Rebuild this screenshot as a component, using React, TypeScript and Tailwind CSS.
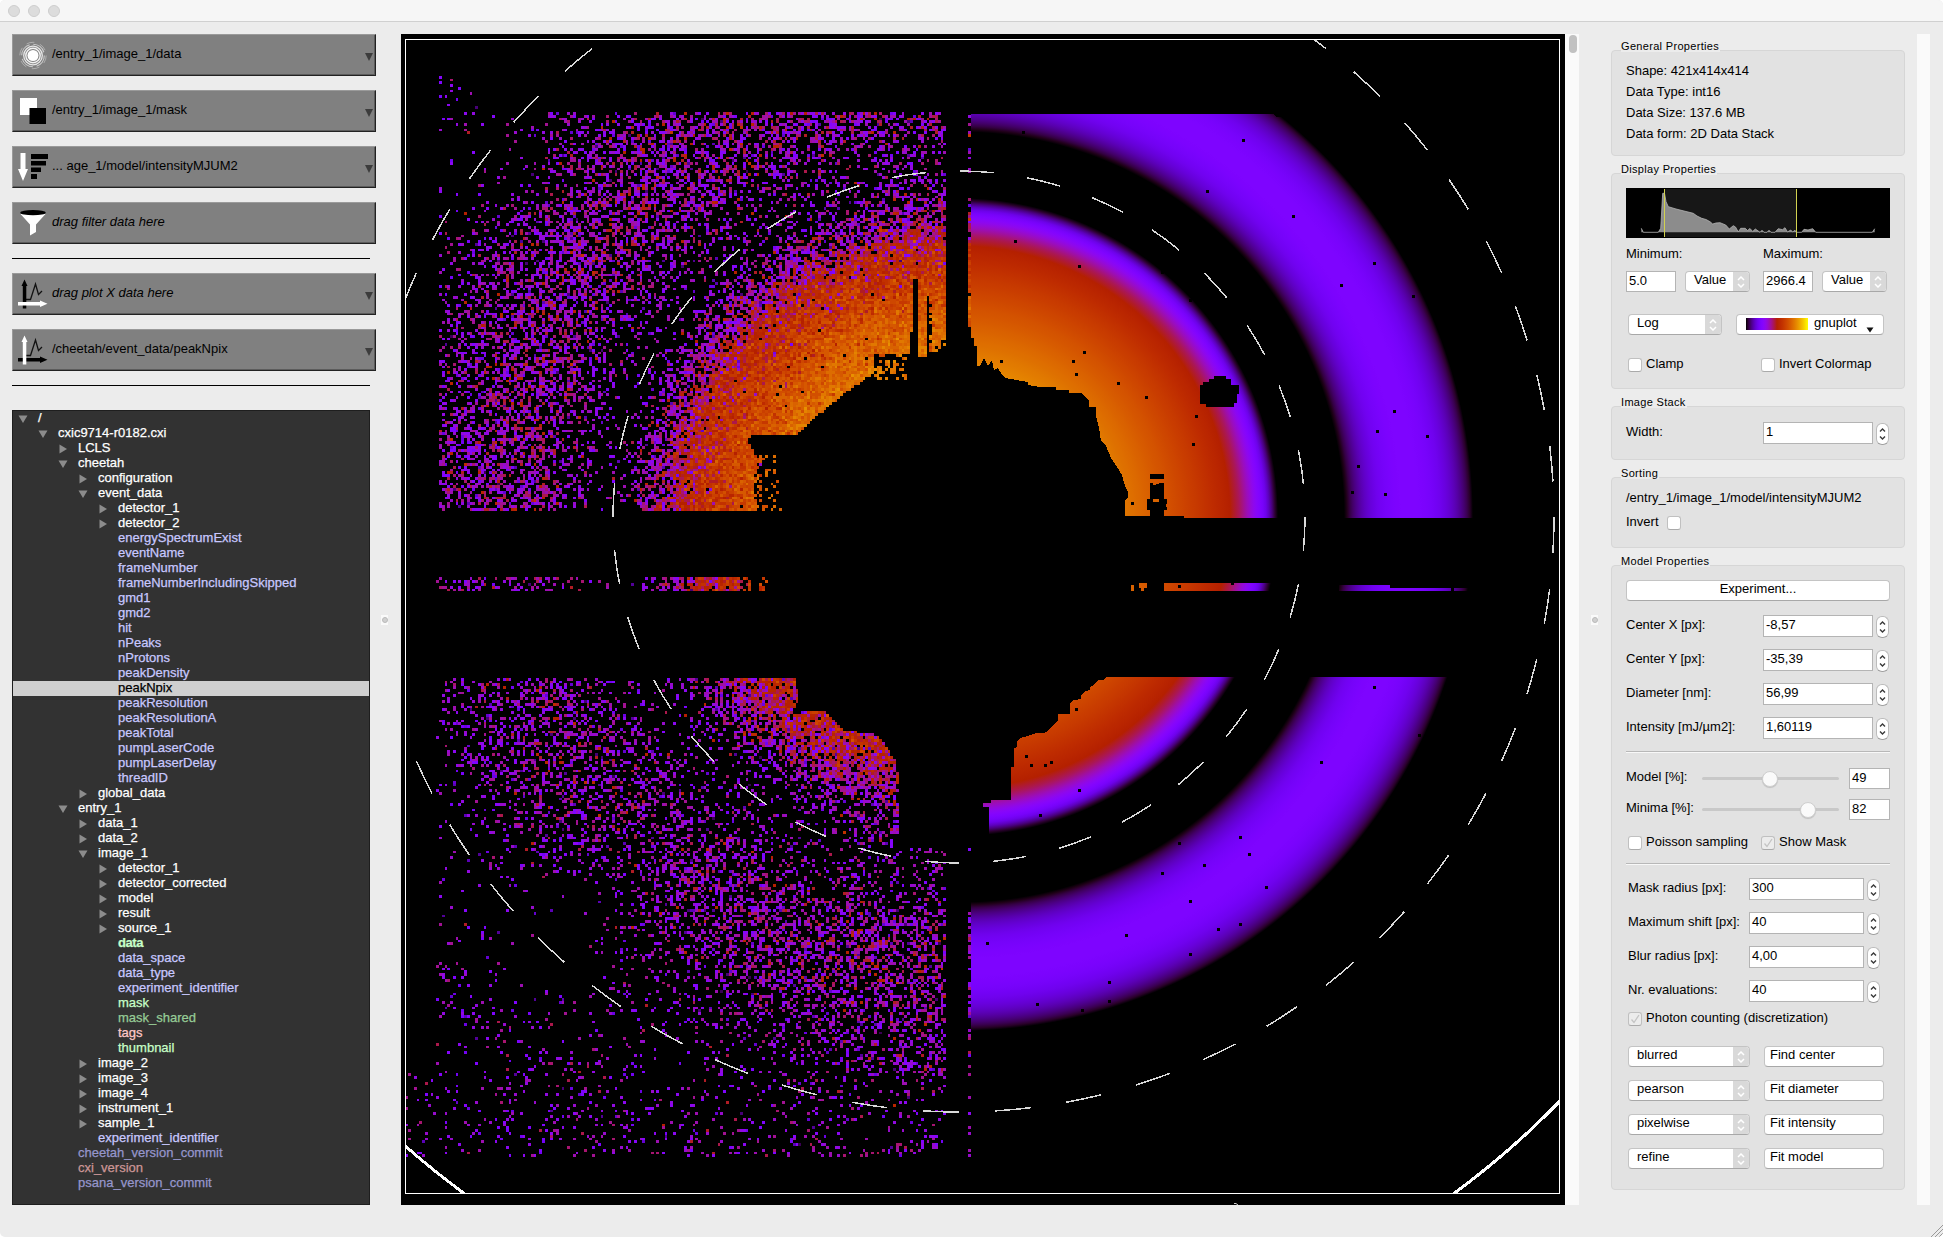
import React from "react";

/* ---------- diffraction pattern ---------- */

type Pt = [number, number];

const CX = 959;
const CY = 517;
const CELL = 2.787;

function gnuplot(t: number): string {
  const c = Math.max(0, Math.min(1, t));
  const r = Math.round(255 * Math.sqrt(c));
  const g = Math.round(255 * c * c * c);
  const b = Math.round(255 * Math.max(0, Math.sin(2 * Math.PI * c)));
  return `rgb(${r},${g},${b})`;
}

function lerp(table: Pt[], x: number): number {
  if (x <= table[0][0]) return table[0][1];
  for (let i = 1; i < table.length; i++) {
    if (x <= table[i][0]) {
      const [x0, y0] = table[i - 1];
      const [x1, y1] = table[i];
      return y0 + ((y1 - y0) * (x - x0)) / (x1 - x0);
    }
  }
  return table[table.length - 1][1];
}

// Brightness (0..1 in the colormap) of the central disc against radius.
const DISC: Pt[] = [
  [100, 0.86], [150, 0.805], [180, 0.745], [210, 0.68], [240, 0.6], [262, 0.53], [271, 0.5],
  [281, 0.44], [291, 0.35], [299, 0.27], [306, 0.2], [312, 0.1], [316, 0.03], [319, 0],
];

function model(r: number): number {
  if (r <= 319) return lerp(DISC, r);
  if (r <= 387 || r >= 513) return 0;
  return 0.246 * Math.pow(Math.sin((Math.PI * (r - 387)) / 126), 0.75);
}

// Mean photon count against radius.
const PHOTONS: Pt[] = [
  [120, 24], [150, 20], [180, 15], [210, 10], [240, 6.2], [271, 3.4], [281, 2.5], [291, 1.7],
  [300, 1.15], [310, 0.8], [319, 0.5], [330, 0.22], [346, 0.08], [360, 0.12], [380, 0.27],
  [405, 0.5], [430, 0.72], [455, 0.78], [480, 0.7], [505, 0.55], [530, 0.36], [560, 0.18],
  [595, 0.05], [640, 0.1], [690, 0.18], [740, 0.15], [800, 0.1],
];

const HOLE_TOP: Pt[] = [
  [754, 512], [754, 491], [757, 459], [748, 441], [754, 435], [798, 435], [817, 416], [844, 394],
  [874, 373], [874, 355], [911, 353], [911, 341], [913, 309], [913, 280], [918, 280], [918, 356],
  [927, 356], [928, 296], [931, 296], [931, 356], [937, 345], [946, 338], [946, 512],
];

const HOLE_BOTTOM: Pt[] = [
  [796, 670], [796, 684], [799, 698], [793, 713], [806, 712], [825, 711], [844, 730], [878, 735],
  [897, 763], [900, 802], [899, 845], [913, 848], [946, 850], [946, 670],
];

function inside(poly: Pt[], x: number, y: number): boolean {
  let hit = false;
  for (let i = 0, j = poly.length - 1; i < poly.length; j = i++) {
    const [xi, yi] = poly[i];
    const [xj, yj] = poly[j];
    if (yi > y !== yj > y && x < ((xj - xi) * (y - yi)) / (yj - yi) + xi) hit = !hit;
  }
  return hit;
}

function makeRandom(seed: number) {
  let s = seed;
  return () => {
    s = (s + 0x6d2b79f5) | 0;
    let t = Math.imul(s ^ (s >>> 15), 1 | s);
    t = (t + Math.imul(t ^ (t >>> 7), 61 | t)) ^ t;
    return ((t ^ (t >>> 14)) >>> 0) / 4294967296;
  };
}

const LEVELS = 40;

function buildNoise(): { color: string; d: string }[] {
  const rnd = makeRandom(182);
  const gauss = () => Math.sqrt(-2 * Math.log(rnd() + 1e-9)) * Math.cos(2 * Math.PI * rnd());
  const poisson = (m: number) => {
    if (m > 15) return Math.max(0, Math.round(m + Math.sqrt(m) * gauss()));
    const limit = Math.exp(-m);
    let k = 0;
    let p = rnd();
    while (p > limit) {
      k++;
      p *= rnd();
    }
    return k;
  };
  const paths: string[] = Array.from({ length: LEVELS }, () => "");
  for (let j = 0; j < 414; j++) {
    const y0 = Math.round(39.5 + j * CELL);
    const y1 = Math.round(39.5 + (j + 1) * CELL);
    const y = (y0 + y1) / 2;
    const top = y > 75 && y < 510;
    const strip = y > 576 && y < 591;
    const bottom = y > 677 && y < 1157;
    if (!top && !strip && !bottom) continue;
    for (let i = 0; i < 204; i++) {
      const x0 = Math.round(405.5 + i * CELL);
      const x1 = Math.min(971, Math.round(405.5 + (i + 1) * CELL));
      const x = (x0 + x1) / 2;
      const sliver = x > 968;
      if (x > 945 && !sliver) continue;
      if (x < (top ? 440 : 437) && !(bottom && y > 1070)) continue;
      if (y < 111 && x > 440 + (y - 72) * 1.5) continue;
      if (sliver && ((y > 326 && y < 844) || y < 114)) continue;
      let islands = false;
      if (top && !sliver && inside(HOLE_TOP, x, y)) {
        const a = x < 782 && y > 456 && rnd() < 0.42 * (1 - (x - 754) / 34);
        const b = x > 874 && x < 908 && y < 380 && y > 353 && rnd() < 0.4;
        const c = x > 929 && y < 352 && rnd() < 0.5;
        if (!a && !b && !c) continue;
        islands = true;
      }
      if (bottom && !sliver && inside(HOLE_BOTTOM, x, y)) continue;
      if (strip && (x > 772 || (x > 741 && rnd() < 0.5) || (x > 752 && x < 760))) continue;
      const r = Math.hypot(x - CX, y - CY);
      let mean = lerp(PHOTONS, r);
      if (r > 310) mean += 0.2 * Math.max(0, 1 - (CX - x) / 330) * (r < 560 ? 1 : 0.7);
      if (strip) mean *= 0.65;
      if (bottom) {
        mean *= r < 320 ? 0.56 : 0.72;
        const u = (x - 560 + (y - 935)) / Math.SQRT2;
        const v = (x - 560 - (y - 935)) / Math.SQRT2;
        mean *= 1 - 0.95 * Math.exp(-(u * u) / 4800 - (v * v) / 14000);
      }
      if (top && x < 545 && y < 200) mean *= 0.5;
      if (r < 240 && !islands && rnd() < 0.004) continue;
      const n = poisson(mean);
      if (n === 0) continue;
      const value = n * 40 + gauss() * 18;
      if (value < 7) continue;
      const t = Math.log(value / 5) / 6.38;
      const level = Math.max(0, Math.min(LEVELS - 1, Math.round(t * LEVELS)));
      paths[level] += `M${x0} ${y0}h${x1 - x0}v${y1 - y0}h${x0 - x1}z`;
    }
  }
  return paths
    .map((d, i) => ({ color: gnuplot((i + 0.1) / LEVELS), d }))
    .filter((p) => p.d !== "");
}

const NOISE = buildNoise();

const STOPS = Array.from({ length: 141 }, (_, i) => {
  const r = 100 + i * 3;
  return { offset: r / 520, color: gnuplot(model(r)) };
});

const MODEL_REGIONS = [
  "M971 114H1273L1277 117H1561V517.5H1184V516H1125V501L1128 497V492L1125 486L1122 475L1119 470L1111 458L1106 446L1101 441L1099 428L1096 416V407H1089V401L1084 395L1081 393H1069V390H1056V387H1040L1028 385V382L1005 378L1001 373L998 368L994 370L992 360L988 366L984 358L980 366H977V346H974V338H971Z",
  "M1164 583H1330V591H1164ZM1139 583H1147V588H1144V591H1141V588H1139ZM1131 585H1134V591H1131Z",
  "M1339 585H1390V588H1451V591H1339ZM1454 588H1470V591H1454Z",
  "M1106 677L1103 680H1098L1094 685L1090 687V690L1085 691L1081 696V699L1074 700L1070 703V714H1058V720L1054 725L1050 728L1047 732L1043 733H1036L1028 736L1020 738L1017 741V747L1014 748V767H1011V800H991V803H983V807H989V860H971V1100H1561V677Z",
].join("");

const DOTS: Pt[] = [
  [1023, 132], [1243, 140], [1207, 191], [1293, 216], [1374, 263], [1341, 285], [1413, 296],
  [1394, 411], [1377, 431], [1427, 436], [1358, 466], [1352, 492], [1385, 494], [1015, 241],
  [1079, 266], [1162, 272], [1190, 300], [1084, 352], [1073, 361], [1001, 361], [1076, 374],
  [1118, 383], [1146, 397], [1196, 416], [1193, 444], [1132, 503], [1076, 709], [1026, 756],
  [1031, 765], [1045, 765], [1051, 762], [1079, 790], [1040, 815], [1374, 687], [1419, 735],
  [1321, 762], [1240, 837], [1179, 843], [1249, 854], [1204, 865], [1162, 873], [1266, 887],
  [1190, 901], [1126, 935], [1218, 929], [1240, 924], [1190, 954], [987, 943], [1109, 982],
  [1037, 1004], [1082, 1010], [1109, 1001], [1179, 586], [1232, 583],
];

const INNER = (2 * Math.PI * 346) / 64;
const OUTER = (2 * Math.PI * 595) / 104;

function Viewer() {
  return (
    <svg className="block bg-black" width="1164" height="1171" viewBox="401 34 1164 1171">
      <defs>
        <radialGradient id="model" gradientUnits="userSpaceOnUse" cx={CX} cy={CY} r="520">
          {STOPS.map((s) => (
            <stop key={s.offset} offset={s.offset} stopColor={s.color} />
          ))}
        </radialGradient>
        <clipPath id="frame">
          <rect x="405" y="39" width="1155" height="1154" />
        </clipPath>
      </defs>
      <g clipPath="url(#frame)" shapeRendering="crispEdges">
        <path d={MODEL_REGIONS} fill="url(#model)" />
        <path
          d="M1150 474h14v5h-14zM1150 483h3v2h3v-1h3v-1h5v16h3v5h-1v3h1v3h-3v6h-14v-6h-3v-11h3z"
          fill="#000"
        />
        <path d="M1153 499h6v3h-6z" fill="#d96400" />
        <path
          d="M1200 385h3v-3h6v-3h5v-3h12v3h5v6h3v0h5v9h-2v9h-3v4h-28v-3h-6z"
          fill="#000"
        />
        {DOTS.map(([x, y]) => (
          <rect key={`${x}-${y}`} x={x - 1} y={y - 1} width="3" height="3" fill="#000" />
        ))}
        {NOISE.map((p) => (
          <path key={p.color} d={p.d} fill={p.color} />
        ))}
        <circle cx={CX} cy={CY} r="346" fill="none" stroke="#d9d9d9" strokeWidth="1.5" strokeDasharray={`${INNER} ${INNER}`} />
        <circle cx={CX} cy={CY} r="595" fill="none" stroke="#d9d9d9" strokeWidth="1.5" strokeDasharray={`${OUTER} ${OUTER}`} />
        <circle cx={CX} cy={CY} r="838" fill="none" stroke="#fff" strokeWidth="3" />
      </g>
      <rect x="405.5" y="39.5" width="1154" height="1154" fill="none" stroke="#fff" />
      <path d="M1234 1203.5h2l2 1.500" stroke="#ccc" fill="none" />
    </svg>
  );
}

/* ---------- left panel ---------- */

const AirIcon = () => (
  <g fill="none" stroke="#fff">
    <circle cx="17" cy="16.500" r="5.500" fill="#fff" stroke="none" />
    <circle cx="17" cy="16.500" r="7.200" strokeWidth="1.400" opacity=".9" />
    <circle cx="17" cy="16.500" r="9.300" strokeWidth="1.300" opacity=".8" />
    <circle cx="17" cy="16.500" r="11.300" strokeWidth="1.100" opacity=".6" strokeDasharray="14 3.750" />
    <circle cx="17" cy="16.500" r="13.200" strokeWidth=".9" opacity=".4" strokeDasharray="8 5.800" />
  </g>
);

const MaskIcon = () => (
  <g>
    <path d="M4 3h17v17H4z" fill="#fff" />
    <path d="M13.500 13H30v16H13.500z" fill="#000" />
  </g>
);

const SortIcon = () => (
  <g>
    <path d="M4.500 2h5v16h2.500L7 30 2 18h2.500z" fill="#fff" />
    <path d="M15 3h17v5H15zM15 10h15v4.500H15zM15 16.500h10V21H15zM15 23h6v5h-6z" fill="#000" />
  </g>
);

const FilterIcon = () => (
  <g>
    <path d="M4.500 7h25L20 17.500V25l-6 3.500v-11z" fill="#fff" />
    <ellipse cx="17" cy="5.700" rx="12.700" ry="2.600" fill="#000" />
  </g>
);

const Curve = () => <path d="M10 21.500h4.500L19.500 6l3 10.500L26 13" fill="none" stroke="#111" strokeWidth="1.300" />;
const UpArrow = ({ color }: { color: string }) => <path d="M8.500 1.500l3 6.500h-1.200v22.500H6.800V8H5.500z" fill={color} />;
const RightArrow = ({ color }: { color: string }) => <path d="M2 24h22v-1.500l7.500 3.200L24 29v-1.500H2z" fill={color} />;

const PlotXIcon = () => (
  <g>
    <Curve />
    <UpArrow color="#000" />
    <RightArrow color="#fff" />
  </g>
);

const PlotYIcon = () => (
  <g>
    <Curve />
    <RightArrow color="#000" />
    <UpArrow color="#fff" />
  </g>
);

function DropButton({ icon, label, hint, arrow = true }: { icon: React.ReactNode; label: string; hint?: boolean; arrow?: boolean }) {
  return (
    <div className="flex h-[42px] w-[364px] items-center border border-t-[#9a9a9a] border-l-[#9a9a9a] border-r-[#222] border-b-[#222] bg-[#808080] pl-[3px] pr-[2px] shadow-[inset_-1px_-1px_0_#5c5c5c]">
      <svg width="32" height="32" viewBox="0 0 32 32" className="shrink-0">
        {icon}
      </svg>
      <span className={hint ? "ml-[4px] flex-1 pb-[3px] italic" : "ml-[4px] flex-1 pb-[3px]"}>{label}</span>
      {arrow && (
        <svg width="8" height="8" viewBox="0 0 8 8" className="mt-[3px]">
          <path d="M0 0h8L4 8z" fill="#3c3c3c" />
        </svg>
      )}
    </div>
  );
}

type Row = { d: number; t: string; a?: "open" | "closed"; c?: string };

const WHITE = "text-white";
const BLUE = "text-[#c8c8ff]";
const DIM_BLUE = "text-[#9696cc]";
const GREEN = "text-[#c8ffc8]";

const ROWS: Row[] = [
  { d: 0, t: "/", a: "open" },
  { d: 1, t: "cxic9714-r0182.cxi", a: "open" },
  { d: 2, t: "LCLS", a: "closed" },
  { d: 2, t: "cheetah", a: "open" },
  { d: 3, t: "configuration", a: "closed" },
  { d: 3, t: "event_data", a: "open" },
  { d: 4, t: "detector_1", a: "closed" },
  { d: 4, t: "detector_2", a: "closed" },
  { d: 4, t: "energySpectrumExist", c: BLUE },
  { d: 4, t: "eventName", c: BLUE },
  { d: 4, t: "frameNumber", c: BLUE },
  { d: 4, t: "frameNumberIncludingSkipped", c: BLUE },
  { d: 4, t: "gmd1", c: BLUE },
  { d: 4, t: "gmd2", c: BLUE },
  { d: 4, t: "hit", c: BLUE },
  { d: 4, t: "nPeaks", c: BLUE },
  { d: 4, t: "nProtons", c: BLUE },
  { d: 4, t: "peakDensity", c: BLUE },
  { d: 4, t: "peakNpix", c: "bg-[#cfcfcf] text-black" },
  { d: 4, t: "peakResolution", c: BLUE },
  { d: 4, t: "peakResolutionA", c: BLUE },
  { d: 4, t: "peakTotal", c: BLUE },
  { d: 4, t: "pumpLaserCode", c: BLUE },
  { d: 4, t: "pumpLaserDelay", c: BLUE },
  { d: 4, t: "threadID", c: BLUE },
  { d: 3, t: "global_data", a: "closed" },
  { d: 2, t: "entry_1", a: "open" },
  { d: 3, t: "data_1", a: "closed" },
  { d: 3, t: "data_2", a: "closed" },
  { d: 3, t: "image_1", a: "open" },
  { d: 4, t: "detector_1", a: "closed" },
  { d: 4, t: "detector_corrected", a: "closed" },
  { d: 4, t: "model", a: "closed" },
  { d: 4, t: "result", a: "closed" },
  { d: 4, t: "source_1", a: "closed" },
  { d: 4, t: "data", c: "font-bold text-[#c8ffc8] tracking-[-0.4px]" },
  { d: 4, t: "data_space", c: BLUE },
  { d: 4, t: "data_type", c: BLUE },
  { d: 4, t: "experiment_identifier", c: BLUE },
  { d: 4, t: "mask", c: GREEN },
  { d: 4, t: "mask_shared", c: "text-[#96cc96]" },
  { d: 4, t: "tags", c: "text-[#ffc8c8]" },
  { d: 4, t: "thumbnail", c: GREEN },
  { d: 3, t: "image_2", a: "closed" },
  { d: 3, t: "image_3", a: "closed" },
  { d: 3, t: "image_4", a: "closed" },
  { d: 3, t: "instrument_1", a: "closed" },
  { d: 3, t: "sample_1", a: "closed" },
  { d: 3, t: "experiment_identifier", c: BLUE },
  { d: 2, t: "cheetah_version_commit", c: DIM_BLUE },
  { d: 2, t: "cxi_version", c: "text-[#cc9696]" },
  { d: 2, t: "psana_version_commit", c: DIM_BLUE },
];

const INDENT = ["pl-[5px]", "pl-[25px]", "pl-[45px]", "pl-[65px]", "pl-[85px]"];

function Tree() {
  return (
    <div className="mt-[24px] h-[795px] w-[358px] border border-[#1e1e1e] bg-[#323232] [-webkit-text-stroke:0.25px]">
      {ROWS.map((r, i) => (
        <div key={i} className={`flex h-[15px] items-center ${INDENT[r.d]} ${r.c ?? WHITE}`}>
          <span className="w-[20px] shrink-0">
            {r.a && (
              <svg width="10" height="10" viewBox="0 0 10 10">
                <path d={r.a === "open" ? "M.5 1.500h9L5 9z" : "M1.500 .5v9L9 5z"} fill="#8c8c8c" />
              </svg>
            )}
          </span>
          <span className="pb-[2px] leading-[14px]">{r.t}</span>
        </div>
      ))}
    </div>
  );
}

/* ---------- right panel ---------- */

const FACE = "rounded-[4px] border border-[#c4c4c4] border-b-[#a8a8a8] bg-white";

function Group({ title, className, children }: { title: string; className: string; children: React.ReactNode }) {
  return (
    <section className={`relative w-[294px] shrink-0 rounded-[4px] border border-[#d6d6d6] bg-[#e2e2e2] pl-[14px] ${className}`}>
      <h2 className="absolute -top-[12px] left-[9px] h-[13px] bg-[#ececec] pr-[1px] text-[11px] leading-[14px] tracking-[0.32px]">
        {title}
      </h2>
      {children}
    </section>
  );
}

function Field({ value, className }: { value: string; className: string }) {
  return (
    <span className={`flex shrink-0 items-center border border-[#b4b4b4] bg-white pl-[2px] ${className}`}>
      <span className="pb-[2px]">{value}</span>
    </span>
  );
}

function Combo({ value, className, pad = "pl-[8px]" }: { value: string; className: string; pad?: string }) {
  return (
    <span className={`flex h-[21px] shrink-0 items-stretch justify-between overflow-hidden ${FACE} ${pad} ${className}`}>
      <span className="leading-[15px]">{value}</span>
      <span className="flex w-[16px] items-center justify-center bg-[#d9d9d9]">
        <svg width="8" height="12" viewBox="0 0 8 12" fill="none" stroke="#fff" strokeWidth="1.500">
          <path d="M1 4l3-3 3 3M1 8l3 3 3-3" />
        </svg>
      </span>
    </span>
  );
}

function Spinner() {
  return (
    <span className="ml-[3px] mt-[1px] flex h-[22px] w-[13px] shrink-0 items-center justify-center rounded-[6px] border border-[#bcbcbc] border-b-[#a0a0a0] bg-white">
      <svg width="7" height="14" viewBox="0 0 7 14" fill="none" stroke="#3a3a3a" strokeWidth="1.400">
        <path d="M1 4.500l2.500-2.500L6 4.500M1 9.500l2.500 2.500L6 9.500" />
      </svg>
    </span>
  );
}

function Check({ checked }: { checked?: boolean }) {
  return (
    <span className={`flex size-[14px] shrink-0 items-center justify-center rounded-[3px] border border-[#c0c0c0] border-b-[#aaa] ${checked ? "bg-[#ececec]" : "bg-white"}`}>
      {checked && (
        <svg width="10" height="10" viewBox="0 0 10 10" fill="none" stroke="#c4c4c4" strokeWidth="1.300">
          <path d="M1.500 5.500l2.500 3L9 1" />
        </svg>
      )}
    </span>
  );
}

function SpinRow({ label, value, narrow }: { label: string; value: string; narrow?: boolean }) {
  return (
    <div className={`mb-[12px] flex h-[22px] ${narrow ? "pl-[2px]" : ""}`}>
      <span className={`shrink-0 leading-[19px] ${narrow ? "w-[121px]" : "w-[137px]"}`}>{label}</span>
      <Field value={value} className={narrow ? "h-[22px] w-[115px]" : "h-[22px] w-[110px]"} />
      <Spinner />
    </div>
  );
}

function SliderRow({ label, value, knob }: { label: string; value: string; knob: string }) {
  return (
    <div className="flex h-[21px] w-[264px] items-center">
      <span className="w-[76px] pb-[3px]">{label}</span>
      <span className="relative h-[3px] w-[137px] rounded-full bg-[#c8c8c8]">
        <span className={`absolute -top-[6px] size-[16px] rounded-full border border-[#cfcfcf] bg-[#fafafa] shadow-[0_1px_1px_rgba(0,0,0,0.15)] ${knob}`} />
      </span>
      <Field value={value} className="ml-auto h-[21px] w-[41px]" />
    </div>
  );
}

function Rule() {
  return <div className="h-[2px] w-[264px] border-t border-t-[#b8b8b8] bg-[#f8f8f8]" />;
}

const HIST =
  "15.3,40.3 17.3,44.3 32.3,44.3 34.7,40.3 36.7,5.3 38.5,5.3 40,13.7 42.3,18.7 50,21 60,23.500 67.3,25.3 71,28 75.7,30.3 80,31.500 84,33.7 86.700,36 90,35 94,34.7 99.7,37 103.3,41 107.3,37.7 109.500,39 112.3,44 114.7,40.3 119.3,40.3 121.500,42.500 124,40.500 126.700,43.500 129.300,41 134,44.3 136,42.300 138,44.3 141,44.3 143,42.300 145,44.3 149,44.3 152.3,40.7 156.500,41.700 159,39.7 161.500,44 164.700,42 166.700,44 169,42.300 170.500,44.3 175.7,44.3 178,41.3 182,42 186.7,40.7 189.7,44.3 246.3,44.3 248.7,40.7";

function Histogram() {
  return (
    <svg width="264" height="50" viewBox="0 0 264 50" className="block bg-black">
      <path d="M38 1h133v48H38z" fill="#171717" />
      <polygon points={`${HIST} 248.7,44.3 15.3,44.3`} fill="#8c8c8c" />
      <polyline points={HIST} fill="none" stroke="#b4b4b4" strokeWidth=".8" />
      <path d="M38.500 1v48M170.500 1v48" stroke="#d2d250" />
    </svg>
  );
}

const FITS = [
  ["blurred", "Find center"],
  ["pearson", "Fit diameter"],
  ["pixelwise", "Fit intensity"],
  ["refine", "Fit model"],
];

function Properties() {
  return (
    <div className="flex w-[306px] flex-col">
      <Group title="General Properties" className="mt-[16px] h-[106px] pt-[10px]">
        {["Shape: 421x414x414", "Data Type: int16", "Data Size: 137.6 MB", "Data form: 2D Data Stack"].map((t) => (
          <p key={t} className="h-[21px] leading-[20px]">{t}</p>
        ))}
      </Group>

      <Group title="Display Properties" className="mt-[17px] h-[216px] pt-[14px]">
        <Histogram />
        <div className="mt-[6px] flex h-[20px] leading-[19px]">
          <span className="w-[137px]">Minimum:</span>
          <span>Maximum:</span>
        </div>
        <div className="mt-[7px] flex">
          <Field value="5.0" className="h-[21px] w-[50px]" />
          <Combo value="Value" className="ml-[9px] w-[65px]" />
          <Field value="2966.4" className="ml-[13px] h-[21px] w-[50px]" />
          <Combo value="Value" className="ml-[9px] w-[65px]" />
        </div>
        <div className="mt-[22px] flex pl-[2px]">
          <Combo value="Log" className="w-[94px]" />
          <span className={`relative ml-[14px] flex h-[21px] w-[148px] pl-[9px] ${FACE}`}>
            <svg width="62" height="12" className="mt-[3px]">
              <defs>
                <linearGradient id="gnuplot">
                  {Array.from({ length: 33 }, (_, i) => (
                    <stop key={i} offset={i / 32} stopColor={gnuplot(i / 32)} />
                  ))}
                </linearGradient>
              </defs>
              <rect width="62" height="12" fill="url(#gnuplot)" />
            </svg>
            <span className="ml-[6px] leading-[15px]">gnuplot</span>
            <svg width="8" height="6" viewBox="0 0 8 6" className="absolute bottom-[1px] right-[9px]">
              <path d="M.5 .5h7L4 5.500z" fill="#111" />
            </svg>
          </span>
        </div>
        <div className="mt-[23px] flex pl-[2px]">
          <Check />
          <span className="ml-[4px] w-[115px] leading-[11px]">Clamp</span>
          <Check />
          <span className="ml-[4px] leading-[11px]">Invert Colormap</span>
        </div>
      </Group>

      <Group title="Image Stack" className="mt-[17px] h-[54px] pt-[15px]">
        <SpinRow label="Width:" value="1" />
      </Group>

      <Group title="Sorting" className="mt-[17px] h-[71px] pt-[10px]">
        <p className="leading-[19px]">/entry_1/image_1/model/intensityMJUM2</p>
        <div className="mt-[9px] flex">
          <span className="w-[41px] leading-[11px]">Invert</span>
          <Check />
        </div>
      </Group>

      <Group title="Model Properties" className="mt-[17px] h-[625px] pt-[14px]">
        <div className={`mb-[14px] h-[21px] w-[264px] text-center leading-[16px] ${FACE}`}>Experiment...</div>
        <SpinRow label="Center X [px]:" value="-8,57" />
        <SpinRow label="Center Y [px]:" value="-35,39" />
        <SpinRow label="Diameter [nm]:" value="56,99" />
        <SpinRow label="Intensity [mJ/µm2]:" value="1,60119" />
        <Rule />
        <div className="mt-[15px] flex flex-col gap-[10px]">
          <SliderRow label="Model [%]:" value="49" knob="left-[60px]" />
          <SliderRow label="Minima [%]:" value="82" knob="left-[98px]" />
        </div>
        <div className="mb-[13px] mt-[16px] flex pl-[2px]">
          <Check />
          <span className="ml-[4px] w-[115px] leading-[11px]">Poisson sampling</span>
          <Check checked />
          <span className="ml-[4px] leading-[11px]">Show Mask</span>
        </div>
        <Rule />
        <div className="mt-[13px]">
          <SpinRow label="Mask radius [px]:" value="300" narrow />
          <SpinRow label="Maximum shift [px]:" value="40" narrow />
          <SpinRow label="Blur radius [px]:" value="4,00" narrow />
          <SpinRow label="Nr. evaluations:" value="40" narrow />
        </div>
        <div className="-mt-[2px] mb-[20px] flex pl-[2px]">
          <Check checked />
          <span className="ml-[4px] leading-[11px]">Photon counting (discretization)</span>
        </div>
        {FITS.map(([mode, action]) => (
          <div key={mode} className="mb-[13px] flex pl-[2px]">
            <Combo value={mode} className="w-[122px]" />
            <span className={`ml-[14px] h-[21px] w-[120px] pl-[5px] leading-[15px] ${FACE}`}>{action}</span>
          </div>
        ))}
      </Group>
    </div>
  );
}

function SplitterHandle() {
  return (
    <div className="mt-[581px] flex h-[10px] w-[7px] items-center justify-center bg-[#fafafa]">
      <span className="size-[6px] rounded-full border border-[#bbb] bg-[#d0d0d0]" />
    </div>
  );
}

export default function App() {
  return (
    <div className="h-[1237px] w-[1943px] overflow-hidden bg-white font-['Liberation_Sans',Arial,sans-serif] text-[13px] text-black">
      <div className="relative flex h-full flex-col overflow-hidden rounded-[5px] bg-[#ececec]">
        <header className="flex h-[22px] shrink-0 items-center gap-[8px] border-b border-[#d0d0d0] bg-[#f6f6f6] pl-[8px]">
          <span className="size-[12px] rounded-full border border-[#cdcdcd] bg-[#dcdcdc]" />
          <span className="size-[12px] rounded-full border border-[#cdcdcd] bg-[#dcdcdc]" />
          <span className="size-[12px] rounded-full border border-[#cdcdcd] bg-[#dcdcdc]" />
        </header>

        <main className="flex h-[1183px] pt-[12px]">
          <aside className="ml-[12px] w-[369px] shrink-0">
            <div className="flex flex-col gap-[14px]">
              <DropButton icon={<AirIcon />} label="/entry_1/image_1/data" />
              <DropButton icon={<MaskIcon />} label="/entry_1/image_1/mask" />
              <DropButton icon={<SortIcon />} label="... age_1/model/intensityMJUM2" />
              <DropButton icon={<FilterIcon />} label="drag filter data here" hint arrow={false} />
              <div className="h-px w-[358px] bg-black" />
              <DropButton icon={<PlotXIcon />} label="drag plot X data here" hint />
              <DropButton icon={<PlotYIcon />} label="/cheetah/event_data/peakNpix" />
              <div className="h-px w-[358px] bg-black" />
            </div>
            <Tree />
          </aside>
          <div className="w-[20px] shrink-0">
            <SplitterHandle />
          </div>
          <Viewer />
          <div className="h-[1171px] w-[14px] shrink-0 bg-[#fafafa] pl-[4px] pt-px">
            <div className="h-[18px] w-[8px] rounded-full bg-[#c1c1c1]" />
          </div>
          <div className="w-[32px] shrink-0 pl-[12px]">
            <SplitterHandle />
          </div>
          <Properties />
          <div className="h-[1171px] w-[13px] shrink-0 bg-[#fafafa]" />
        </main>

        <svg className="absolute bottom-0 right-0" width="13" height="13" viewBox="0 0 13 13" stroke="#999">
          <path d="M1 13L13 1M5 13l8-8M9 13l4-4" />
        </svg>
      </div>
    </div>
  );
}
